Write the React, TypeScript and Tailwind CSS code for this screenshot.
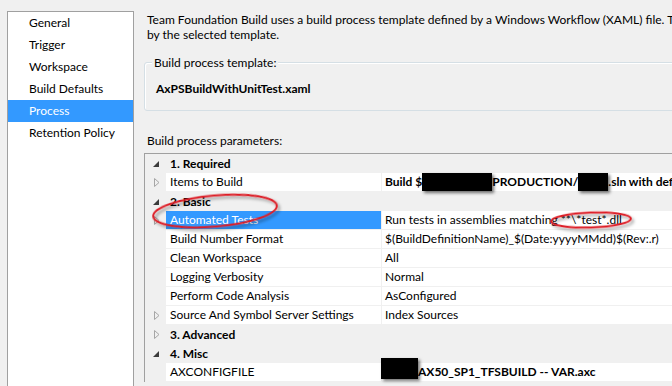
import type { ReactNode } from 'react';

type Row =
  | { kind: 'group'; label: string; open: boolean }
  | { kind: 'item'; name: string; value: ReactNode; more?: boolean; selected?: boolean; bold?: boolean };

const navItems = ['General', 'Trigger', 'Workspace', 'Build Defaults', 'Process', 'Retention Policy'];

const Redact = ({ w, className = '' }: { w: number; className?: string }) => (
  <span
    className={`inline-block shrink-0 bg-black shadow-[2px_2px_3px_rgba(0,0,0,0.55)] ${className}`}
    style={{ width: w }}
  />
);

const rows: Row[] = [
  { kind: 'group', label: '1. Required', open: true },
  {
    kind: 'item',
    name: 'Items to Build',
    more: true,
    bold: true,
    value: (
      <>
        <span>Build $</span>
        <Redact w={70} className="h-[18px]" />
        <span>PRODUCTION/</span>
        <Redact w={30} className="h-[18px]" />
        <span>.sln with default platform and configuration</span>
      </>
    ),
  },
  { kind: 'group', label: '2. Basic', open: true },
  {
    kind: 'item',
    name: 'Automated Tests',
    more: true,
    selected: true,
    value: 'Run tests in assemblies matching **\\*test*.dll',
  },
  { kind: 'item', name: 'Build Number Format', value: '$(BuildDefinitionName)_$(Date:yyyyMMdd)$(Rev:.r)' },
  { kind: 'item', name: 'Clean Workspace', value: 'All' },
  { kind: 'item', name: 'Logging Verbosity', value: 'Normal' },
  { kind: 'item', name: 'Perform Code Analysis', value: 'AsConfigured' },
  { kind: 'item', name: 'Source And Symbol Server Settings', more: true, value: 'Index Sources' },
  { kind: 'group', label: '3. Advanced', open: false },
  { kind: 'group', label: '4. Misc', open: true },
  {
    kind: 'item',
    name: 'AXCONFIGFILE',
    bold: true,
    value: (
      <>
        <Redact w={37} className="h-[21px] -ml-[4px] relative -top-[4px]" />
        <span>AX50_SP1_TFSBUILD -- VAR.axc</span>
      </>
    ),
  },
];

function Expander({ open }: { open: boolean }) {
  if (open) {
    return (
      <svg width="6" height="6" viewBox="0 0 6 6" className="ml-[8px]">
        <polygon points="6,0 6,6 0,6" fill="#3c3c3c" />
      </svg>
    );
  }
  return (
    <svg width="6" height="9" viewBox="0 0 6 9" className="ml-[9px]">
      <polygon points="0.5,0.5 5,4.5 0.5,8.5" fill="none" stroke="#a6a6a6" strokeWidth="1" />
    </svg>
  );
}

function GridRow({ row }: { row: Row }) {
  if (row.kind === 'group') {
    return (
      <div className="flex h-[19px] items-center bg-[#f0f0f0]">
        <div className="w-[21px] shrink-0 flex items-center">
          <Expander open={row.open} />
        </div>
        <div className="pl-[4px] font-bold">{row.label}</div>
      </div>
    );
  }
  return (
    <div className="flex h-[19px]">
      <div className="w-[21px] shrink-0 flex items-center bg-[#f0f0f0]">
        {row.more && <Expander open={false} />}
      </div>
      <div
        className={`w-[215px] shrink-0 flex items-center pl-[4px] whitespace-nowrap border-b border-[#f0f0f0] ${
          row.selected ? 'bg-[#3399ff] text-white' : 'bg-white'
        }`}
      >
        {row.name}
      </div>
      <div
        className={`flex-1 flex items-center pl-[3px] whitespace-nowrap bg-white border-l border-b border-[#f0f0f0] ${
          row.bold ? 'font-bold' : ''
        }`}
      >
        {row.value}
      </div>
    </div>
  );
}

export default function App() {
  return (
    <div className="relative w-[672px] h-[386px] overflow-hidden bg-[#f0f0f0] flex font-['Lato',sans-serif] text-[12px] text-black">
      <div className="ml-[7px] mt-[11px] w-[127px] h-[420px] shrink-0 border border-[#a0a0a0] bg-white">
        {navItems.map((item) => (
          <div
            key={item}
            className={`h-[22px] flex items-center pl-[21px] ${
              item === 'Process' ? 'bg-[#3399ff] text-white' : ''
            }`}
          >
            {item}
          </div>
        ))}
      </div>

      <div className="ml-[10px] w-[620px] shrink-0">
        <p className="mt-[12px] pl-[3px] leading-[15px] whitespace-nowrap">
          Team Foundation Build uses a build process template defined by a Windows Workflow (XAML) file. The
          behavior of this build definition can be customized by setting the build process parameters provided
          <br />
          by the selected template.
        </p>

        <div className="relative mt-[20px] h-[49px] w-[600px] rounded-[3px] border border-[#d5dfe5] shadow-[inset_1px_1px_0_#ffffff]">
          <span className="absolute -top-[8px] left-[7px] px-[2px] bg-[#f0f0f0] leading-[15px]">
            Build process template:
          </span>
          <div className="pt-[18px] pl-[11px] font-bold leading-[15px]">AxPSBuildWithUnitTest.xaml</div>
        </div>

        <div className="mt-[22px] pl-[3px] leading-[15px]">Build process parameters:</div>

        <div className="mt-[5px] w-[600px] border-l border-t border-[#a0a0a0]">
          {rows.map((row, i) => (
            <GridRow key={i} row={row} />
          ))}
        </div>
      </div>

      <svg className="absolute inset-0 pointer-events-none" width="672" height="386">
        <defs>
          <filter id="shadow" x="-20%" y="-50%" width="140%" height="200%">
            <feDropShadow dx="2" dy="2.5" stdDeviation="1.5" floodColor="#000" floodOpacity="0.4" />
          </filter>
        </defs>
        <ellipse
          cx="215"
          cy="211"
          rx="62"
          ry="15.5"
          transform="rotate(-5 215 211)"
          fill="none"
          stroke="#dd1f26"
          strokeWidth="2"
          filter="url(#shadow)"
        />
        <ellipse
          cx="591"
          cy="220"
          rx="40"
          ry="7.5"
          transform="rotate(-2 591 220)"
          fill="none"
          stroke="#dd1f26"
          strokeWidth="2"
          filter="url(#shadow)"
        />
      </svg>
    </div>
  );
}
